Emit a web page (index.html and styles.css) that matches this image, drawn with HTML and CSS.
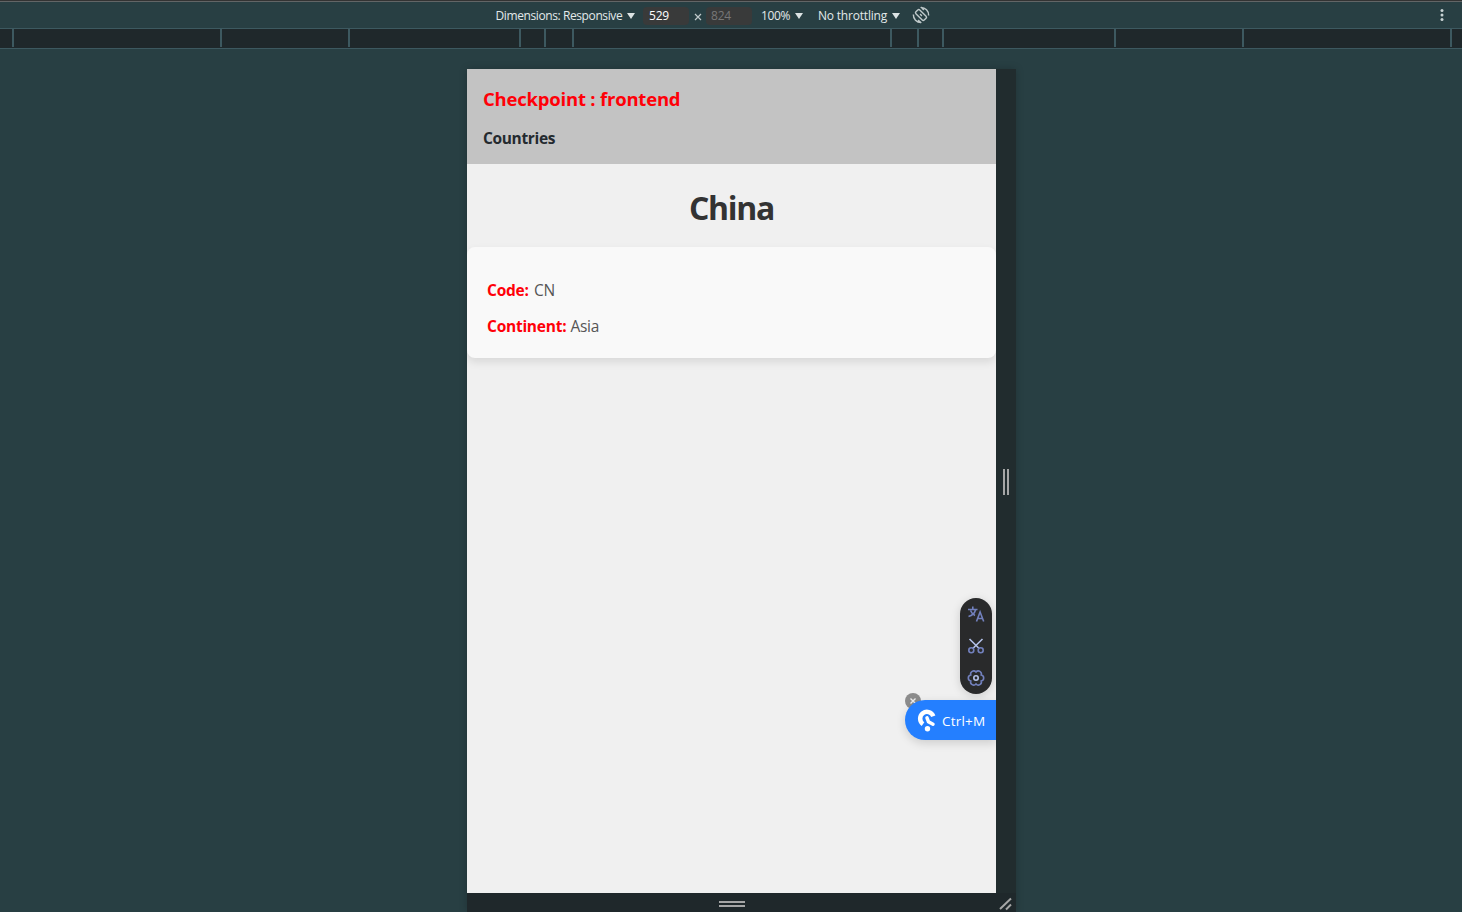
FILE: index.html
```html
<!DOCTYPE html>
<html lang="en">
<head>
<meta charset="utf-8">
<title>Checkpoint : frontend</title>
<link rel="stylesheet" href="styles.css">
</head>
<body>
<div class="toolbar">
  <span class="dimensions">Dimensions: Responsive</span>
  <i class="caret"></i>
  <span class="field width-field">529</span>
  <svg class="times" viewBox="0 0 8 8"><path d="M1 1l6 6M7 1L1 7"/></svg>
  <span class="field height-field">824</span>
  <span class="zoom">100%</span>
  <i class="caret"></i>
  <span class="throttling">No throttling</span>
  <i class="caret"></i>
  <svg class="rotate" viewBox="0 0 20 20"><rect x="7" y="3.500" width="6" height="13" rx="1.500" transform="rotate(-45 10 10)"/><path d="M1.500 9.500A8.500 8.500 0 0 0 10 18.300M10.300 18.800l-3.500-3.300M18.500 10.500A8.500 8.500 0 0 0 10 1.700M9.700 1.200l3.500 3.300M9 9l2 2"/></svg>
  <svg class="more" viewBox="0 0 4 14"><circle cx="2" cy="2.500" r="1.500"/><circle cx="2" cy="7" r="1.500"/><circle cx="2" cy="11.500" r="1.500"/></svg>
</div>
<div class="ruler"><i></i><i></i><i></i><i></i><i></i><i></i><i></i><i></i><i></i><i></i><i></i><i></i></div>
<main class="stage">
  <div class="device">
    <div class="page">
      <header class="header">
        <div class="brand">Checkpoint : frontend</div>
        <nav class="nav">Countries</nav>
      </header>
      <h1 class="title"><span>China</span></h1>
      <section class="card">
        <p><strong class="code-label">Code:</strong><span class="code-value">CN</span></p>
        <p><strong class="continent-label">Continent:</strong><span class="continent-value">Asia</span></p>
      </section>
      <div class="tools">
        <svg viewBox="0 0 18 18"><path d="M1 4.500h9.500M5.800 1.500v3M8.500 5c-.8 3-3.500 5.500-7 6.500M3.500 5.500c1 2.300 2.300 3.900 4.500 5M9.500 16.500l3.600-9.500 3.600 9.500M10.800 13.500h4.600"/></svg>
        <svg viewBox="0 0 18 18"><path class="pale" d="M2.500 2l9.700 9.500M15.500 2L5.800 11.500"/><circle cx="4.300" cy="13.300" r="2.500"/><circle cx="13.700" cy="13.300" r="2.500"/></svg>
        <svg viewBox="0 0 18 18"><path d="M9 3a3.050 3.050 0 0 1 5.200 3a3.050 3.050 0 0 1 0 6a3.050 3.050 0 0 1-5.200 3a3.050 3.050 0 0 1-5.200-3a3.050 3.050 0 0 1 0-6a3.050 3.050 0 0 1 5.200-3Z"/><circle class="pale" cx="9" cy="9" r="2.200"/></svg>
      </div>
      <div class="close"><svg viewBox="0 0 16 16"><path d="M5.500 5.500l5 5M10.500 5.500l-5 5"/></svg></div>
      <div class="shortcut">
        <svg viewBox="0 0 20 24"><path class="hook" d="M6 16.200A6.800 6.800 0 1 1 16.300 8.200"/><path class="stem" d="M10 9.800l1.500 4 4.500 2.400"/><circle cx="10.500" cy="20.700" r="2.700"/></svg>
        <span>Ctrl+M</span>
      </div>
    </div>
    <div class="side-handle"><i></i><i></i></div>
    <div class="bottom-handle"><i></i><i></i></div>
    <div class="corner"><svg viewBox="0 0 14 14"><path d="M1 12L12 1.500M7 12.500l5-5"/></svg></div>
  </div>
</main>
</body>
</html>
```
FILE: styles.css
```css
* { box-sizing: border-box; }
body {
  margin: 0; width: 1462px; height: 912px; overflow: hidden;
  background: #283f43; font-family: "Open Sans", "Noto Sans", sans-serif;
  display: flex; flex-direction: column;
}
svg { fill: none; display: block; }
.toolbar {
  height: 28px; border-top: 1px solid #333; box-shadow: inset 0 1px #626566;
  display: flex; align-items: center; padding: 2px 18px 0 495.5px;
  font-size: 12px; color: #e3e9ea; white-space: nowrap; flex: none;
}
.toolbar span { line-height: 18px; flex: none; }
.dimensions { width: 131.5px; letter-spacing: -.4px; }
.caret { width: 8px; height: 6px; margin-top: 1px; background: #dce3e4; clip-path: polygon(0 0, 100% 0, 50% 100%); flex: none; }
.field { width: 46px; height: 18px; border-radius: 4px; background: #393a3a; padding-left: 6px; letter-spacing: -.2px; }
.width-field { margin-left: 8px; color: #fff; }
.times { width: 8px; height: 8px; margin: 3px 4px 0 5px; stroke: #bfc9cb; stroke-width: 1.2; flex: none; }
.height-field { color: #777; padding-left: 5px; }
.zoom { width: 34px; margin-left: 9px; letter-spacing: -.4px; }
.throttling { width: 74px; margin-left: 15px; letter-spacing: -.2px; }
.rotate { width: 18px; height: 18px; margin-left: 12px; margin-top: -2px; stroke: #bfc9ca; stroke-width: 1.6; flex: none; }
.more { width: 4px; height: 14px; margin: -2px 0 0 auto; fill: #c9d3d4; }
.ruler {
  height: 21px; flex: none; background: #1f282b;
  border-top: 1px solid #3d5960; border-bottom: 1px solid #3d5960;
  display: flex;
}
.ruler i { width: 2px; height: 18px; background: #3d5960; margin-left: 206px; }
.ruler i:nth-child(1) { margin-left: 12px; }
.ruler i:nth-child(3), .ruler i:nth-child(11) { margin-left: 126px; }
.ruler i:nth-child(4) { margin-left: 169px; }
.ruler i:nth-child(5), .ruler i:nth-child(9) { margin-left: 23px; }
.ruler i:nth-child(6) { margin-left: 26px; }
.ruler i:nth-child(7) { margin-left: 316px; }
.ruler i:nth-child(8) { margin-left: 25px; }
.ruler i:nth-child(10) { margin-left: 170px; }
.stage { padding: 20px 0 0 467px; }
.device {
  display: grid; grid-template: 824px 19px / 529px 20px; width: 549px;
  box-shadow: 0 0 8px rgba(0,0,0,.2);
}
.page { background: #f0f0f0; position: relative; overflow: hidden; }
.header { height: 95px; background: #c3c3c3; padding: 17px 16px 0; color: #242a2f; font-weight: 700; }
.brand { color: #ff0008; font-size: 18.500px; line-height: 26px; letter-spacing: -.21px; white-space: nowrap; }
.nav { font-size: 15.500px; line-height: 22px; margin-top: 15px; letter-spacing: -.35px; }
.title { margin: 0; height: 83px; text-align: center; color: #333; font-size: 32px; line-height: 44px; padding-top: 22px; letter-spacing: -1.3px; }
.card {
  height: 111px; background: #f9f9f9; border-radius: 8px; padding: 31px 20px 0;
  box-shadow: 0 4px 8px rgba(0,0,0,.1); color: #555; font-size: 15.500px;
}
.card p { margin: 0 0 12px; height: 24px; line-height: 24px; display: flex; white-space: nowrap; }
.card span { letter-spacing: -.3px; }
.card strong { color: #ff0008; letter-spacing: -.25px; }
.code-label { width: 47px; }
.continent-label { width: 83.5px; }
.tools {
  position: absolute; left: 493px; top: 529px; width: 32px; height: 96px; border-radius: 16px;
  background: #292a2b; box-shadow: 0 2px 10px rgba(0,0,0,.15);
  display: flex; flex-direction: column; align-items: center; justify-content: space-around;
}
.tools svg { width: 18px; height: 18px; stroke: #7280bd; stroke-width: 1.6; }
.tools .pale { stroke: #b4c2e9; }
.close { position: absolute; left: 438px; top: 624px; width: 16px; height: 16px; border-radius: 50%; background: #8c8c8c; }
.close svg { stroke: #eee; stroke-width: 1.4; }
.shortcut {
  position: absolute; left: 438px; top: 631px; width: 91px; height: 40px;
  border-radius: 20px 0 0 20px; background: #247fff; box-shadow: 0 3px 10px rgba(0,0,0,.15);
  display: flex; align-items: center; padding-left: 12px; color: #fff; font-size: 13.500px;
}
.shortcut span { padding-top: 2px; letter-spacing: .2px; }
.shortcut svg { width: 20px; height: 24px; margin-right: 5px; flex: none; }
.shortcut circle { fill: #fff; }
.hook { stroke: #fff; stroke-width: 4.500; }
.stem { stroke: #fff; stroke-width: 3.500; stroke-linecap: round; }
.side-handle { background: #212c2e; display: flex; align-items: center; justify-content: center; gap: 2px; padding-top: 2px; }
.side-handle i { width: 2px; height: 26px; background: #a5a6a6; }
.bottom-handle { background: #1f282b; display: flex; flex-direction: column; align-items: center; justify-content: center; gap: 2px; padding-top: 3px; }
.bottom-handle i { width: 26px; height: 2px; background: #a5a6a6; }
.corner { background: #1f282b; padding: 4px 0 0 3px; }
.corner svg { width: 14px; height: 14px; stroke: #a5a6a6; stroke-width: 2; }
```
